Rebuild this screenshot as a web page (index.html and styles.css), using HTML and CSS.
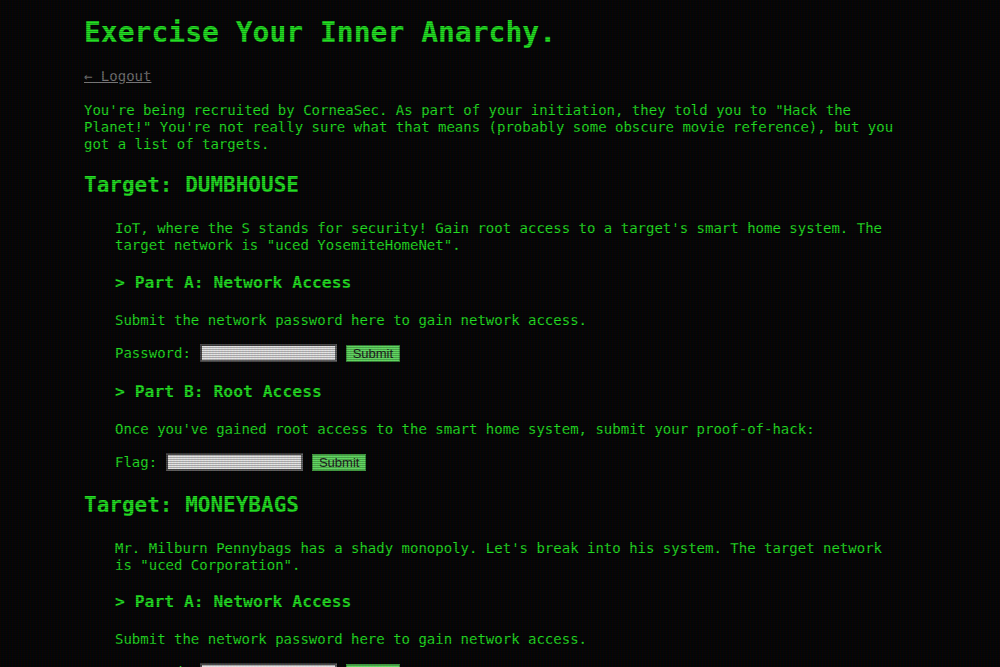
FILE: index.html
```html
<!DOCTYPE html>
<html lang="en">
<head>
<meta charset="utf-8">
<title>Exercise Your Inner Anarchy.</title>
<link rel="stylesheet" href="styles.css">
</head>
<body>
<div class="page">
  <h1 class="title">Exercise Your Inner Anarchy.</h1>
  <p class="nav"><a class="logout" href="#">← Logout</a></p>
  <p class="intro">You're being recruited by CorneaSec. As part of your initiation, they told you to "Hack the Planet!" You're not really sure what that means (probably some obscure movie reference), but you got a list of targets.</p>

  <section class="target">
    <h2 class="target-title">Target: DUMBHOUSE</h2>
    <div class="target-body">
      <p class="desc">IoT, where the S stands for security! Gain root access to a target's smart home system. The target network is "uced YosemiteHomeNet".</p>
      <h3 class="part">&gt; Part A: Network Access</h3>
      <p class="hint">Submit the network password here to gain network access.</p>
      <form class="row">
        <label class="label">Password:</label>
        <input class="field" type="text">
        <button class="submit" type="button">Submit</button>
      </form>
      <h3 class="part">&gt; Part B: Root Access</h3>
      <p class="hint">Once you've gained root access to the smart home system, submit your proof-of-hack:</p>
      <form class="row">
        <label class="label">Flag:</label>
        <input class="field" type="text">
        <button class="submit" type="button">Submit</button>
      </form>
    </div>
  </section>

  <section class="target">
    <h2 class="target-title">Target: MONEYBAGS</h2>
    <div class="target-body">
      <p class="desc">Mr. Milburn Pennybags has a shady monopoly. Let's break into his system. The target network is "uced Corporation".</p>
      <h3 class="part">&gt; Part A: Network Access</h3>
      <p class="hint">Submit the network password here to gain network access.</p>
      <form class="row">
        <label class="label">Password:</label>
        <input class="field" type="text">
        <button class="submit" type="button">Submit</button>
      </form>
      <h3 class="part">&gt; Part B: Root Access</h3>
      <p class="hint">Once you've gained root access, submit your proof-of-hack:</p>
      <form class="row">
        <label class="label">Flag:</label>
        <input class="field" type="text">
        <button class="submit" type="button">Submit</button>
      </form>
    </div>
  </section>
</div>
</body>
</html>
```

FILE: styles.css
```css
html, body {
  margin: 0;
  padding: 0;
  background: #050505;
}

body {
  color: #22e622;
  font-family: "DejaVu Sans Mono", "Liberation Mono", monospace;
  font-size: 14px;
  line-height: 17px;
  overflow: hidden;
}

body::after {
  content: "";
  position: fixed;
  inset: 0;
  pointer-events: none;
  background:
    linear-gradient(rgba(18, 16, 16, 0) 50%, rgba(0, 0, 0, 0.25) 50%),
    linear-gradient(90deg, rgba(255, 0, 0, 0.06), rgba(0, 255, 0, 0.02), rgba(0, 0, 255, 0.06));
  background-size: 100% 2px, 3px 100%;
}

.page {
  width: 832px;
  margin: 0 auto;
}

.title {
  font-size: 28px;
  line-height: 33px;
  font-weight: bold;
  margin: 16px 0 19px;
}

.nav {
  margin: 0 0 17px;
}

.logout {
  color: #777;
  text-decoration: underline;
}

.intro {
  margin: 0 0 20px;
}

.target-title {
  font-size: 21px;
  line-height: 25px;
  font-weight: bold;
  margin: 0 0 22px;
}

.target-body {
  padding: 0 31px;
}

.desc {
  margin: 0 0 19px;
}

.part {
  font-size: 16.38px;
  line-height: 20px;
  font-weight: bold;
  margin: 0 0 19px;
}

.hint {
  margin: 0 0 15px;
}

.row {
  display: flex;
  align-items: center;
  gap: 9px;
  height: 18px;
  margin: 0 0 20px;
}

.label {
  line-height: 17px;
}

.field {
  box-sizing: border-box;
  width: 137px;
  height: 18px;
  margin: 0;
  padding: 0 2px;
  background: #e6e6e6;
  border-style: solid;
  border-width: 2px;
  border-top-color: #4a4a4a;
  border-left-color: #4a4a4a;
  border-bottom-color: #5e5e5e;
  border-right-color: #6a6a6a;
}

.submit {
  box-sizing: border-box;
  width: 54px;
  height: 17px;
  margin: 0;
  padding: 0;
  background: #62dc62;
  border: 1px solid #3f9a3f;
  color: #222;
  font-family: "Liberation Sans", Arial, sans-serif;
  font-size: 13px;
  line-height: 15px;
}

.target + .target {
  margin-top: 22px;
}

.target + .target .desc {
  margin-bottom: 18px;
}
```
